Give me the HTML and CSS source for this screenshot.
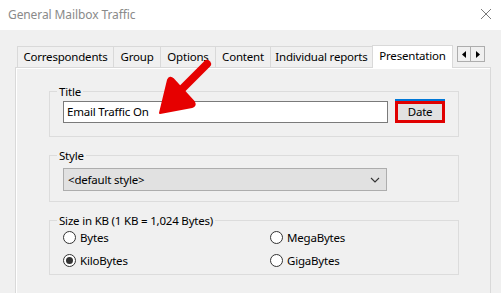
FILE: index.html
```html
<!DOCTYPE html>
<html>
<head>
<meta charset="utf-8">
<link rel="stylesheet" href="styles.css">
</head>
<body>
<div class="window">
  <div class="titlebar">
    <span class="title-text">General Mailbox Traffic</span>
    <svg class="close" width="12" height="12" viewBox="0 0 12 12"><path d="M1 1 L11 11 M11 1 L1 11" stroke="#7a7a7a" stroke-width="1" fill="none"/></svg>
  </div>
  <div class="body">
    <div class="tabrow">
      <div class="tabs">
        <div class="tab">Correspondents</div>
        <div class="tab">Group</div>
        <div class="tab">Options</div>
        <div class="tab">Content</div>
        <div class="tab">Individual reports</div>
        <div class="tab active">Presentation</div>
      </div>
      <div class="scroller">
        <div class="sbtn"><svg width="4" height="7" viewBox="0 0 4 7"><path d="M4 0 L0 3.5 L4 7 Z" fill="#000"/></svg></div>
        <div class="sbtn"><svg width="4" height="7" viewBox="0 0 4 7"><path d="M0 0 L4 3.5 L0 7 Z" fill="#000"/></svg></div>
      </div>
    </div>
    <div class="panel">
      <fieldset class="group g-title">
        <legend>Title</legend>
        <div class="row">
          <div class="textbox">Email Traffic On</div>
          <button class="btn-date">Date</button>
        </div>
      </fieldset>
      <fieldset class="group g-style">
        <legend>Style</legend>
        <div class="combo">
          <span>&lt;default style&gt;</span>
          <svg width="10" height="6" viewBox="0 0 10 6"><path d="M1 1 L5 5 L9 1" stroke="#333" stroke-width="1.1" fill="none"/></svg>
        </div>
      </fieldset>
      <fieldset class="group g-size">
        <legend>Size in KB (1 KB = 1,024 Bytes)</legend>
        <div class="radios">
          <label class="radio"><span class="dot"></span>Bytes</label>
          <label class="radio"><span class="dot"></span>MegaBytes</label>
          <label class="radio"><span class="dot on"></span>KiloBytes</label>
          <label class="radio"><span class="dot"></span>GigaBytes</label>
        </div>
      </fieldset>
      <svg class="arrow" width="70" height="70" viewBox="0 0 70 70">
        <path d="M56 9 L28 37" stroke="#e60000" stroke-width="8" stroke-linecap="round" fill="none"/>
        <path d="M9 58 L17 25 Q19 21 22 24 L43 47 Q45 51 41 52 Z" fill="#e60000" stroke="#e60000" stroke-width="2" stroke-linejoin="round"/>
      </svg>
    </div>
  </div>
</div>
</body>
</html>
```

FILE: styles.css
```css
* { box-sizing: border-box; }
html, body { margin: 0; padding: 0; }
body {
  width: 501px;
  height: 293px;
  overflow: hidden;
  font-family: "Noto Sans", "Open Sans", sans-serif;
  font-size: 11.5px;
  letter-spacing: -0.2px;
  color: #000;
  background: #f0f0f0;
}
.window { width: 501px; height: 293px; display: flex; flex-direction: column; }
.titlebar {
  height: 30px;
  background: #fff;
  display: flex;
  align-items: center;
  justify-content: space-between;
  padding: 0 8px 1px 8px;
  flex: none;
}
.title-text { color: #8a8a8a; font-size: 12px; letter-spacing: -0.1px; }
.close { margin-right: 1px; margin-top: -2px; }
.body { flex: 1; display: flex; flex-direction: column; padding: 14px 10px 0 15px; }
.tabrow { display: flex; align-items: flex-end; height: 23px; padding-left: 2px; }
.tabs { display: flex; align-items: flex-end; }
.tab {
  height: 21px;
  border: 1px solid #d9d9d9;
  border-right: none;
  border-bottom: none;
  background: #f0f0f0;
  display: flex;
  align-items: center;
  justify-content: center;
  white-space: nowrap;
  padding-bottom: 1px;
}
.tab:nth-child(1) { width: 96px; }
.tab:nth-child(2) { width: 47px; }
.tab:nth-child(3) { width: 55px; }
.tab:nth-child(4) { width: 55px; }
.tab:nth-child(5) { width: 102px; }
.tab.active {
  width: 81px;
  height: 23px;
  background: #fff;
  border-right: 1px solid #d9d9d9;
  padding-bottom: 4px;
  position: relative;
  z-index: 1;
  margin-bottom: -1px;
}
.scroller { display: flex; margin-left: 4px; align-self: flex-start; margin-top: 2px; }
.sbtn {
  width: 14px;
  height: 16px;
  border: 1px solid #adadad;
  background: #f0f0f0;
  display: flex;
  align-items: center;
  justify-content: center;
}
.sbtn + .sbtn { border-left: none; }
.panel {
  position: relative;
  flex: 1;
  border: 1px solid #d9d9d9;
  border-bottom: none;
  box-shadow: inset 1px 1px 0 #fff;
  background: #f0f0f0;
  padding: 16px 31px 0 33px;
  display: flex;
  flex-direction: column;
  gap: 11px;
}
.group {
  margin: 0;
  border: 1px solid #dcdcdc;
  padding: 0 13px 0 13px;
  min-width: 0;
}
.group legend { padding: 0 2px; margin-left: -6px; line-height: 15px; }
.g-title { height: 53px; padding-top: 1px; }
.row { display: flex; gap: 7px; align-items: center; }
.textbox {
  width: 326px;
  height: 22px;
  border: 1px solid #7a7a7a;
  background: #fff;
  padding: 0 3px;
  line-height: 20px;
}
.btn-date {
  width: 50px;
  height: 22px;
  border: 3px solid #e00000;
  background: #e1e1e1;
  font: inherit;
  letter-spacing: inherit;
  padding: 0 0 1px 0;
  box-shadow: 0 -2px 0 #0078d7;
  margin-top: 1px;
}
.g-style { height: 54px; padding-top: 5px; }
.combo {
  width: 324px;
  height: 23px;
  border: 1px solid #adadad;
  background: #e1e1e1;
  display: flex;
  align-items: center;
  justify-content: space-between;
  padding: 0 6px 0 4px;
}
.g-size { height: 62px; padding-top: 0; }
.radios {
  display: grid;
  grid-template-columns: 207px auto;
  row-gap: 5px;
}
.radio { display: flex; align-items: center; gap: 4px; height: 18px; }
.dot {
  width: 13px;
  height: 13px;
  border: 1px solid #333;
  border-radius: 50%;
  background: #fff;
  display: inline-block;
  position: relative;
}
.dot.on::after {
  content: "";
  position: absolute;
  left: 2px; top: 2px;
  width: 7px; height: 7px;
  border-radius: 50%;
  background: #333;
}
.arrow { position: absolute; left: 135px; top: -13px; }
```
